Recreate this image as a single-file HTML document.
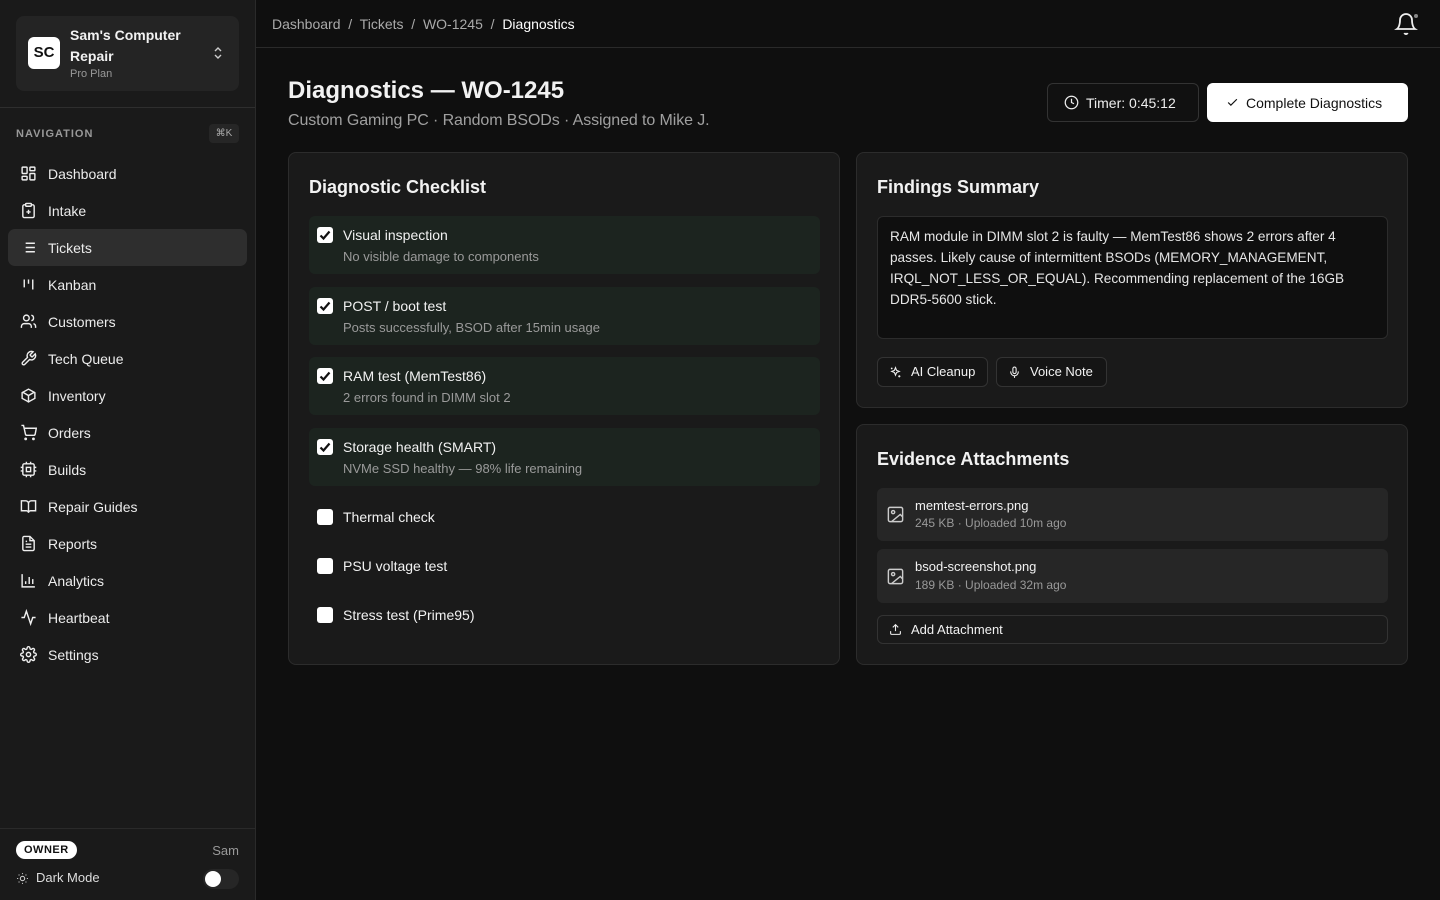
<!DOCTYPE html>
<html><head><meta charset="utf-8"><style>
*{box-sizing:border-box;margin:0;padding:0}
body{width:1440px;height:900px;background:#0f0f0f;font-family:"Liberation Sans",sans-serif;color:#f2f2f2;position:relative;overflow:hidden}
.sb{position:absolute;left:0;top:0;width:256px;height:900px;background:#1a1a1a;border-right:1px solid #2a2a2a}
.org{position:absolute;left:16px;top:16px;width:223px;height:75px;background:#242424;border-radius:8px}
.logo{position:absolute;left:12px;top:21px;width:32px;height:32px;background:#fff;border-radius:6px;color:#111;font-weight:bold;font-size:15px;text-align:center;line-height:32px}
.on{position:absolute;left:54px;top:9px;font-size:14px;font-weight:bold;line-height:21px;width:140px}
.pp{position:absolute;left:54px;top:52px;font-size:11px;color:#999}
.nav{position:absolute;left:16px;top:128px;font-size:11px;letter-spacing:1px;color:#999;font-weight:bold}
.kbd{position:absolute;left:209px;top:124px;width:30px;height:19px;background:#262626;border-radius:4px;font-size:10px;color:#aaa;text-align:center;line-height:19px}
.ni{position:absolute;left:8px;width:239px;height:37px;border-radius:7px;font-size:14px;line-height:38px;padding-left:40px;color:#ececec}
.ni svg{position:absolute;left:12px;top:10px}
.ni.a{background:#2e2e2e}
.foot{position:absolute;left:0;top:828px;width:255px;border-top:1px solid #2a2a2a;height:72px}
.own{position:absolute;left:16px;top:12px;background:#fff;color:#111;font-size:11px;font-weight:bold;border-radius:10px;padding:3px 8px;letter-spacing:.5px}
.hdr{position:absolute;left:256px;top:0;right:0;height:48px;border-bottom:1px solid #2a2a2a}
.bc{position:absolute;left:16px;top:16px;font-size:14px;color:#aaa}
.card{position:absolute;background:#1a1a1a;border:1px solid #2c2c2c;border-radius:8px}
.ct{position:absolute;left:20px;top:24px;font-size:18px;font-weight:bold}
.it{position:absolute;left:20px;width:511px;height:58px;border-radius:6px;background:#1c241f}
.cb{position:absolute;left:8px;top:11px;width:16px;height:16px;border-radius:3px;background:#fff}
.it .l{position:absolute;left:34px;top:11px;font-size:14px}
.it .s{position:absolute;left:34px;top:33px;font-size:13px;color:#9a9a9a}
.btn{position:absolute;border:1px solid #333;border-radius:6px;font-size:13px;background:#151515}
</style></head><body>
<div class="sb">
 <div class="org"><div class="logo">SC</div><div class="on">Sam's Computer Repair</div><div class="pp">Pro Plan</div>
 <svg style="position:absolute;left:197px;top:30px" width="10" height="14" viewBox="0 0 10 14" fill="none" stroke="#ccc" stroke-width="1.4"><path d="M2 5l3-3 3 3M2 9l3 3 3-3"/></svg></div>
 <div style="position:absolute;left:0;top:107px;width:255px;border-top:1px solid #2e2e2e"></div>
 <div class="nav">NAVIGATION</div><div class="kbd">⌘K</div>
 <div class="ni" style="top:155px"><svg width="17" height="17" viewBox="0 0 24 24" fill="none" stroke="#eee" stroke-width="2"><rect x="3" y="3" width="7" height="9" rx="1"/><rect x="14" y="3" width="7" height="5" rx="1"/><rect x="14" y="12" width="7" height="9" rx="1"/><rect x="3" y="16" width="7" height="5" rx="1"/></svg>Dashboard</div>
 <div class="ni" style="top:192px"><svg width="17" height="17" viewBox="0 0 24 24" fill="none" stroke="#eee" stroke-width="2"><rect x="8" y="2" width="8" height="4" rx="1"/><path d="M16 4h2a2 2 0 012 2v14a2 2 0 01-2 2H6a2 2 0 01-2-2V6a2 2 0 012-2h2M12 11v6M9 14h6"/></svg>Intake</div>
 <div class="ni a" style="top:229px"><svg width="17" height="17" viewBox="0 0 24 24" fill="none" stroke="#eee" stroke-width="2"><path d="M8 6h13M8 12h13M8 18h13M3 6h.01M3 12h.01M3 18h.01"/></svg>Tickets</div>
 <div class="ni" style="top:266px"><svg width="17" height="17" viewBox="0 0 24 24" fill="none" stroke="#eee" stroke-width="2"><path d="M6 5v11M12 5v6M18 5v14"/></svg>Kanban</div>
 <div class="ni" style="top:303px"><svg width="17" height="17" viewBox="0 0 24 24" fill="none" stroke="#eee" stroke-width="2"><path d="M16 21v-2a4 4 0 00-4-4H6a4 4 0 00-4 4v2"/><circle cx="9" cy="7" r="4"/><path d="M22 21v-2a4 4 0 00-3-3.9M16 3.1a4 4 0 010 7.8"/></svg>Customers</div>
 <div class="ni" style="top:340px"><svg width="17" height="17" viewBox="0 0 24 24" fill="none" stroke="#eee" stroke-width="2"><path d="M14.7 6.3a1 1 0 000 1.4l1.6 1.6a1 1 0 001.4 0l3.8-3.8a6 6 0 01-7.9 7.9l-6.9 6.9a2.1 2.1 0 01-3-3l6.9-6.9a6 6 0 017.9-7.9z"/></svg>Tech Queue</div>
 <div class="ni" style="top:377px"><svg width="17" height="17" viewBox="0 0 24 24" fill="none" stroke="#eee" stroke-width="2"><path d="M21 16V8l-9-5-9 5v8l9 5 9-5z"/><path d="M3.3 7L12 12l8.7-5M12 22V12"/></svg>Inventory</div>
 <div class="ni" style="top:414px"><svg width="17" height="17" viewBox="0 0 24 24" fill="none" stroke="#eee" stroke-width="2"><circle cx="8" cy="21" r="1"/><circle cx="19" cy="21" r="1"/><path d="M2 2h3l2.7 12.4a2 2 0 002 1.6h9.7a2 2 0 002-1.6L23 6H6"/></svg>Orders</div>
 <div class="ni" style="top:451px"><svg width="17" height="17" viewBox="0 0 24 24" fill="none" stroke="#eee" stroke-width="2"><rect x="4" y="4" width="16" height="16" rx="2"/><rect x="9" y="9" width="6" height="6"/><path d="M9 1v3M15 1v3M9 20v3M15 20v3M20 9h3M20 14h3M1 9h3M1 14h3"/></svg>Builds</div>
 <div class="ni" style="top:488px"><svg width="17" height="17" viewBox="0 0 24 24" fill="none" stroke="#eee" stroke-width="2"><path d="M2 4h6a4 4 0 014 4v13a3 3 0 00-3-3H2zM22 4h-6a4 4 0 00-4 4v13a3 3 0 013-3h7z"/></svg>Repair Guides</div>
 <div class="ni" style="top:525px"><svg width="17" height="17" viewBox="0 0 24 24" fill="none" stroke="#eee" stroke-width="2"><path d="M14 2H6a2 2 0 00-2 2v16a2 2 0 002 2h12a2 2 0 002-2V8z"/><path d="M14 2v6h6M16 13H8M16 17H8M10 9H8"/></svg>Reports</div>
 <div class="ni" style="top:562px"><svg width="17" height="17" viewBox="0 0 24 24" fill="none" stroke="#eee" stroke-width="2"><path d="M3 3v18h18M8 17v-4M13 17V7M18 17v-7"/></svg>Analytics</div>
 <div class="ni" style="top:599px"><svg width="17" height="17" viewBox="0 0 24 24" fill="none" stroke="#eee" stroke-width="2"><path d="M22 12h-4l-3 9L9 3l-3 9H2"/></svg>Heartbeat</div>
 <div class="ni" style="top:636px"><svg width="17" height="17" viewBox="0 0 24 24" fill="none" stroke="#eee" stroke-width="2"><circle cx="12" cy="12" r="3"/><path d="M19.4 15a1.7 1.7 0 00.3 1.8l.1.1a2 2 0 11-2.8 2.8l-.1-.1a1.7 1.7 0 00-1.8-.3 1.7 1.7 0 00-1 1.5V21a2 2 0 11-4 0v-.1a1.7 1.7 0 00-1.1-1.5 1.7 1.7 0 00-1.8.3l-.1.1a2 2 0 11-2.8-2.8l.1-.1a1.7 1.7 0 00.3-1.8 1.7 1.7 0 00-1.5-1H3a2 2 0 110-4h.1a1.7 1.7 0 001.5-1.1 1.7 1.7 0 00-.3-1.8l-.1-.1a2 2 0 112.8-2.8l.1.1a1.7 1.7 0 001.8.3H9a1.7 1.7 0 001-1.5V3a2 2 0 114 0v.1a1.7 1.7 0 001 1.5 1.7 1.7 0 001.8-.3l.1-.1a2 2 0 112.8 2.8l-.1.1a1.7 1.7 0 00-.3 1.8V9a1.7 1.7 0 001.5 1H21a2 2 0 110 4h-.1a1.7 1.7 0 00-1.5 1z"/></svg>Settings</div>
 <div class="foot"><div class="own">OWNER</div><div style="position:absolute;right:16px;top:14px;font-size:13px;color:#999">Sam</div>
 <svg style="position:absolute;left:16px;top:43px" width="13" height="13" viewBox="0 0 24 24" fill="none" stroke="#ccc" stroke-width="2"><circle cx="12" cy="12" r="4"/><path d="M12 2v2M12 20v2M4.9 4.9l1.4 1.4M17.7 17.7l1.4 1.4M2 12h2M20 12h2M4.9 19.1l1.4-1.4M17.7 6.3l1.4-1.4"/></svg>
 <div style="position:absolute;left:36px;top:41px;font-size:13px;color:#ddd">Dark Mode</div>
 <div style="position:absolute;left:203px;top:40px;width:36px;height:20px;border-radius:10px;background:#262626"><div style="position:absolute;left:2px;top:2px;width:16px;height:16px;border-radius:50%;background:#fff"></div></div></div>
</div>
<div class="hdr"><div class="bc">Dashboard &nbsp;/&nbsp; Tickets &nbsp;/&nbsp; WO-1245 &nbsp;/&nbsp; <span style="color:#fff">Diagnostics</span></div>
<svg style="position:absolute;right:22px;top:12px" width="24" height="24" viewBox="0 0 24 24" fill="none" stroke="#eee" stroke-width="1.8"><path d="M6 8a6 6 0 0112 0c0 7 3 9 3 9H3s3-2 3-9M10.3 21a1.9 1.9 0 003.4 0"/></svg>
<div style="position:absolute;right:22px;top:14px;width:4px;height:4px;border-radius:50%;background:#888"></div></div>
<div style="position:absolute;left:288px;top:77px;font-size:24px;font-weight:bold">Diagnostics — WO-1245</div>
<div style="position:absolute;left:288px;top:112px;font-size:16px;color:#a0a0a0;letter-spacing:-0.1px">Custom Gaming PC · Random BSODs · Assigned to Mike J.</div>
<div class="btn" style="left:1047px;top:83px;width:152px;height:39px;background:#111;color:#eee;font-size:14px;line-height:38px;padding-left:38px"><svg style="position:absolute;left:16px;top:11px" width="15" height="15" viewBox="0 0 24 24" fill="none" stroke="#eee" stroke-width="2"><circle cx="12" cy="12" r="10"/><path d="M12 6v6l4 2"/></svg>Timer: 0:45:12</div>
<div class="btn" style="left:1207px;top:83px;width:201px;height:39px;background:#fff;border-color:#fff;color:#111;font-size:14px;line-height:38px;padding-left:38px"><svg style="position:absolute;left:18px;top:12px" width="13" height="13" viewBox="0 0 24 24" fill="none" stroke="#111" stroke-width="2.2"><path d="M20 6L9 17l-5-5"/></svg>Complete Diagnostics</div>

<div class="card" style="left:288px;top:152px;width:552px;height:513px">
 <div class="ct">Diagnostic Checklist</div>
 <div class="it" style="top:63px"><div class="cb"><svg width="16" height="16" viewBox="0 0 16 16"><path d="M3.5 8.5l3 3 6-7" fill="none" stroke="#111" stroke-width="2.2"/></svg></div><div class="l">Visual inspection</div><div class="s">No visible damage to components</div></div>
 <div class="it" style="top:134px"><div class="cb"><svg width="16" height="16" viewBox="0 0 16 16"><path d="M3.5 8.5l3 3 6-7" fill="none" stroke="#111" stroke-width="2.2"/></svg></div><div class="l">POST / boot test</div><div class="s">Posts successfully, BSOD after 15min usage</div></div>
 <div class="it" style="top:204px"><div class="cb"><svg width="16" height="16" viewBox="0 0 16 16"><path d="M3.5 8.5l3 3 6-7" fill="none" stroke="#111" stroke-width="2.2"/></svg></div><div class="l">RAM test (MemTest86)</div><div class="s">2 errors found in DIMM slot 2</div></div>
 <div class="it" style="top:275px"><div class="cb"><svg width="16" height="16" viewBox="0 0 16 16"><path d="M3.5 8.5l3 3 6-7" fill="none" stroke="#111" stroke-width="2.2"/></svg></div><div class="l">Storage health (SMART)</div><div class="s">NVMe SSD healthy — 98% life remaining</div></div>
 <div class="it" style="top:345px;background:none;height:38px"><div class="cb"></div><div class="l">Thermal check</div></div>
 <div class="it" style="top:394px;background:none;height:38px"><div class="cb"></div><div class="l">PSU voltage test</div></div>
 <div class="it" style="top:443px;background:none;height:38px"><div class="cb"></div><div class="l">Stress test (Prime95)</div></div>
</div>

<div class="card" style="left:856px;top:152px;width:552px;height:256px">
 <div class="ct">Findings Summary</div>
 <div style="position:absolute;left:20px;top:63px;width:511px;height:123px;background:#0f0f0f;border:1px solid #2c2c2c;border-radius:6px;padding:9px 12px;font-size:13.6px;line-height:21px;color:#e6e6e6"><div style="width:482px">RAM module in DIMM slot 2 is faulty — MemTest86 shows 2 errors after 4 passes. Likely cause of intermittent BSODs (MEMORY_MANAGEMENT, IRQL_NOT_LESS_OR_EQUAL). Recommending replacement of the 16GB DDR5-5600 stick.</div></div>
 <div class="btn" style="left:20px;top:204px;width:111px;height:30px;line-height:28px;padding-left:33px"><svg style="position:absolute;left:11px;top:8px" width="13" height="13" viewBox="0 0 24 24" fill="none" stroke="#eee" stroke-width="2"><path d="M12 3l2 5 5 2-5 2-2 5-2-5-5-2 5-2zM19 17v4M17 19h4M5 3v3M3.5 4.5h3"/></svg>AI Cleanup</div>
 <div class="btn" style="left:139px;top:204px;width:111px;height:30px;line-height:28px;padding-left:33px"><svg style="position:absolute;left:11px;top:8px" width="13" height="13" viewBox="0 0 24 24" fill="none" stroke="#eee" stroke-width="2"><rect x="9" y="2" width="6" height="12" rx="3"/><path d="M19 10v1a7 7 0 01-14 0v-1M12 18v4"/></svg>Voice Note</div>
</div>

<div class="card" style="left:856px;top:424px;width:552px;height:241px">
 <div class="ct">Evidence Attachments</div>
 <div style="position:absolute;left:20px;top:63px;width:511px;height:53px;background:#262626;border-radius:6px">
  <svg style="position:absolute;left:9px;top:17px" width="19" height="19" viewBox="0 0 24 24" fill="none" stroke="#ccc" stroke-width="1.8"><rect x="3" y="3" width="18" height="18" rx="2"/><circle cx="9" cy="9" r="2"/><path d="M21 15l-3-3-11 9"/></svg>
  <div style="position:absolute;left:38px;top:10px;font-size:13px">memtest-errors.png</div>
  <div style="position:absolute;left:38px;top:28px;font-size:12px;color:#999">245 KB · Uploaded 10m ago</div></div>
 <div style="position:absolute;left:20px;top:124px;width:511px;height:54px;background:#262626;border-radius:6px">
  <svg style="position:absolute;left:9px;top:18px" width="19" height="19" viewBox="0 0 24 24" fill="none" stroke="#ccc" stroke-width="1.8"><rect x="3" y="3" width="18" height="18" rx="2"/><circle cx="9" cy="9" r="2"/><path d="M21 15l-3-3-11 9"/></svg>
  <div style="position:absolute;left:38px;top:10px;font-size:13px">bsod-screenshot.png</div>
  <div style="position:absolute;left:38px;top:29px;font-size:12px;color:#999">189 KB · Uploaded 32m ago</div></div>
 <div class="btn" style="left:20px;top:190px;width:511px;height:29px;line-height:27px;padding-left:33px;background:#1a1a1a"><svg style="position:absolute;left:11px;top:7px" width="13" height="13" viewBox="0 0 24 24" fill="none" stroke="#eee" stroke-width="2"><path d="M21 15v4a2 2 0 01-2 2H5a2 2 0 01-2-2v-4M17 8l-5-5-5 5M12 3v12"/></svg>Add Attachment</div>
</div>
</body></html>
